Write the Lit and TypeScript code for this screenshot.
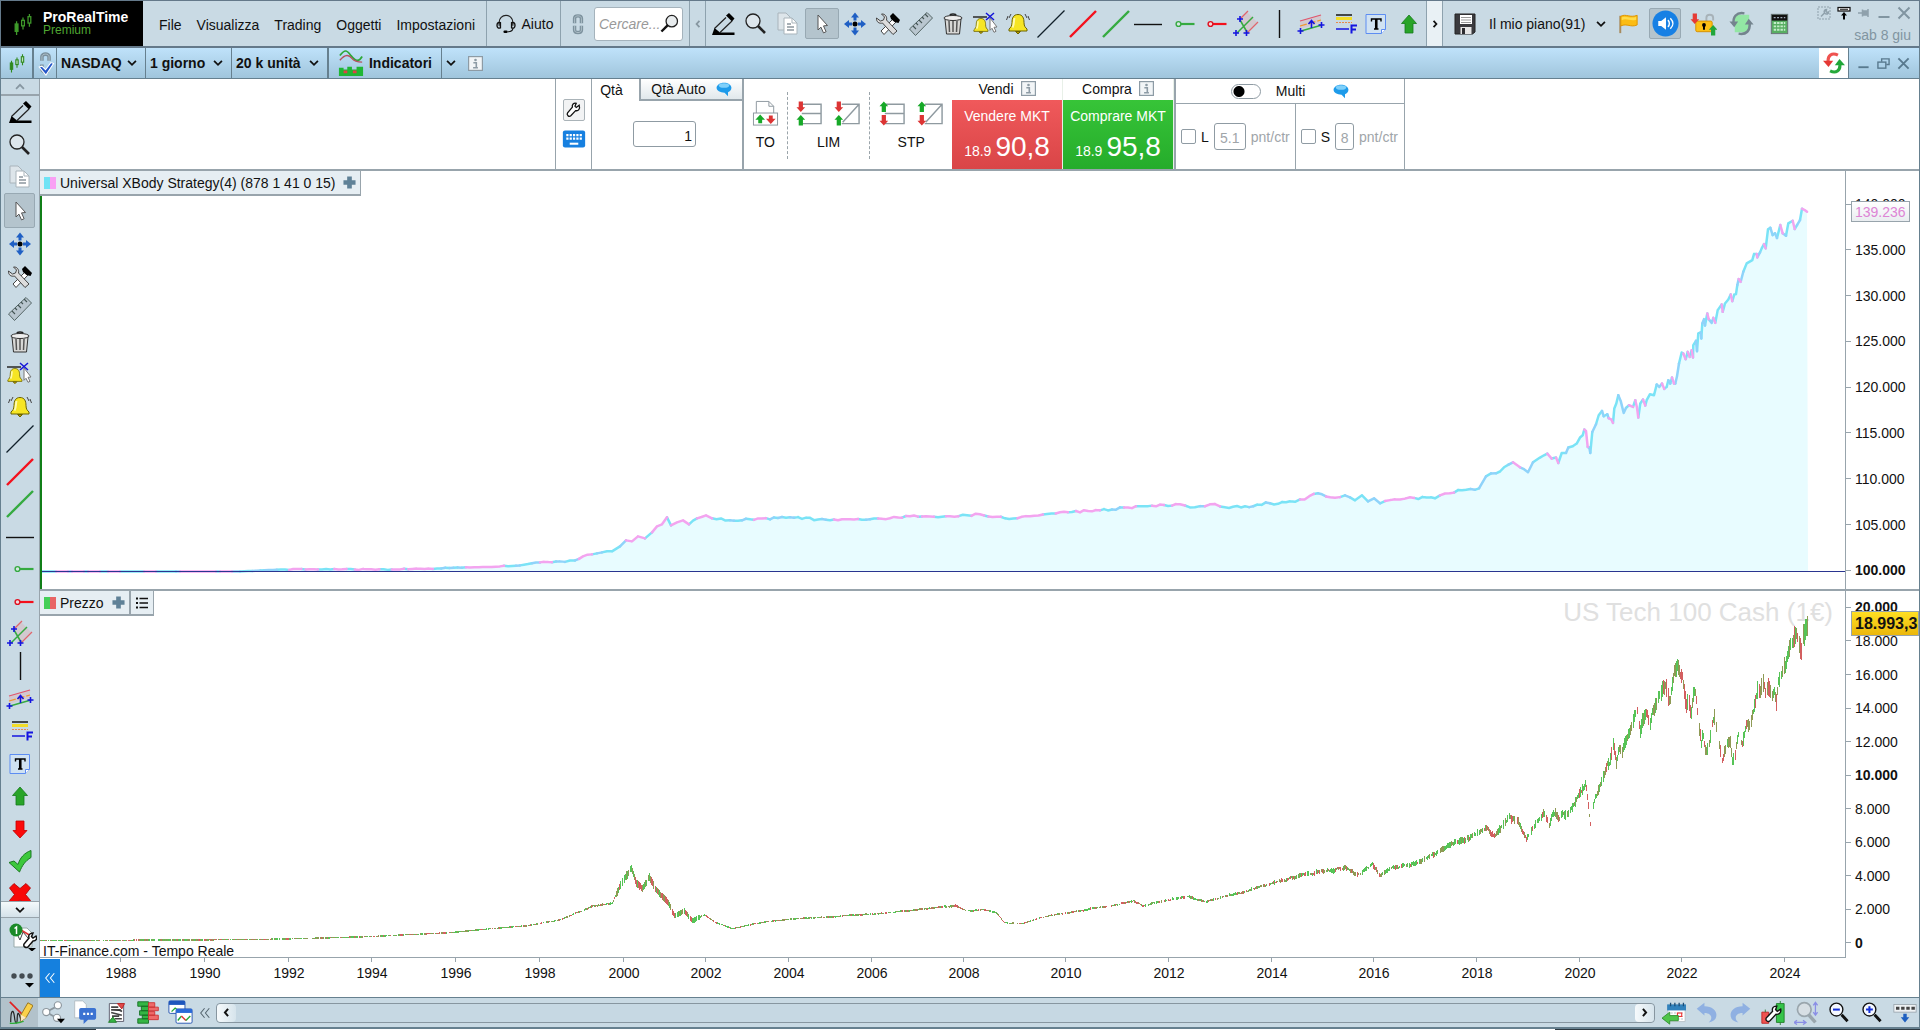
import { LitElement, html, svg, css, nothing } from "lit";
import { customElement } from "lit/decorators.js";
import { styleMap } from "lit/directives/style-map.js";

type Point = [number, number];

/* ---------- icons: 28 x 28 grid ---------- */

const plus = (x: number, y: number) =>
  svg`<path d="M${x - 3} ${y}h6M${x} ${y - 3}v6" stroke="#1414e0" stroke-width="1.6"/>`;

const bell = svg`<path d="M14 4.500c-4.500 0-6 3.500-6 8 0 4-1.500 5-3 6.500v2h18v-2c-1.500-1.500-3-2.500-3-6.500 0-4.500-1.500-8-6-8z" fill="#f6e524" stroke="#6b6200"/><path d="M10.500 8c-1 3 0 6-2 9.500" stroke="#fffbb0" stroke-width="2" fill="none"/><path d="M11.500 21.500h5l-2.500 2.500z" fill="#b59a00" stroke="#6b6200"/>`;

const lens = (color: string) => svg`<circle cx="11" cy="11" r="7" fill="#dde6ec" stroke="${color}" stroke-width="1.300"/><path d="m16 16 7 7" stroke="${color}" stroke-width="2.600"/>`;

const candles = svg`<g stroke="#2f8a1e" stroke-width="1.400"><path d="M7 11v15M14 7v13M21 3v14" /><rect x="5.500" y="14" width="3" height="8" fill="#2f8a1e"/><rect x="12.500" y="10" width="3" height="6" fill="#bfe0c0"/><rect x="19.500" y="6" width="3" height="7" fill="#bfe0c0"/></g>`;
const brandCandles = svg`<g stroke="#3f9a2a" stroke-width="1.400"><path d="M7 11v15M14 7v13M21 3v14" /><rect x="5.500" y="14" width="3" height="8" fill="#3f9a2a"/><rect x="12.500" y="10" width="3" height="6" fill="#000"/><rect x="19.500" y="6" width="3" height="7" fill="#000"/></g>`;

const arrowUp = (x: number, y: number, c: string) =>
  svg`<path d="M${x} ${y}l4.500 5h-2.300v6h-4.400v-6h-2.300z" fill="${c}"/>`;
const arrowDown = (x: number, y: number, c: string) =>
  svg`<path d="M${x} ${y}l4.500-5h-2.300v-6h-4.400v6h-2.300z" fill="${c}"/>`;
const GREEN = "#17a928";
const RED = "#dc3434";

const glass = (inner: unknown) => svg`<circle cx="11" cy="10" r="7.500" fill="#f4f8ff" stroke="#111" stroke-width="1.600"/>${inner}<path d="m17 16 7 7.500" stroke="#111" stroke-width="3.400"/>`;

const ICONS: Record<string, unknown> = {
  pencil: svg`<path d="m17 7.500-11.500 11M23 11 11 22.500" stroke="#222" stroke-width="1.200"/><path d="m20 3 5.500 5.500-2.500 3-6-6z"/><path d="M5.500 18 3 25h22.500v-2.500H11z"/>`,
  search: lens("#222"),
  copy: svg`<g stroke="#a9b4bb"><path d="M4 3h8l4 4v13H4z" fill="#dde5ea"/><path d="M10 8h8l5 5v11H10z" fill="#fff"/></g><path d="M18 8v5h5" fill="none" stroke="#a9b4bb"/><path d="M13 14h4M13 17h7M13 20h7" stroke="#8c979e" stroke-width="1.500"/>`,
  cursor: svg`<path d="m10 5 9.500 10.500-4 .4 2.600 5.800-2.600 1.200-2.600-5.800-2.900 2.900z" fill="#fff" stroke="#555"/>`,
  move: svg`<g fill="#1f5fc4"><path d="m14 2.500 4 5h-2.500v3h-3v-3H10zM14 25.500l4-5h-2.500v-3h-3v3H10zM3 14l5-4v2.500h3v3H8V18zM25 14l-5-4v2.500h-3v3h3V18z"/></g><circle cx="14" cy="14" r="2.500"/>`,
  tools: svg`<path d="m7 21 12-12 3 3L10 24.500z" fill="#fff" stroke="#444"/><path d="M2.500 8c-.5 4 3 6 6 5L19 24.500l4-3.500L12.500 10c1-3-1.500-6.500-5-6l3 3-1 3-3 1z" fill="#dcdcdc" stroke="#444"/><path d="m16 6 3-3 7 7-1.500 3-4-1-3.500-3z"/>`,
  ruler: svg`<path d="M2.500 19 20 2.500l5.500 5.500L8.500 25.500z" fill="#b9c6cf" stroke="#566"/><path d="m6 16 3 3m0-6 2 2m1-5 3 3m0-6 2 2m1-5 3 3" stroke="#455" stroke-width="1.100"/>`,
  bin: svg`<path d="m6 9 1.500 15h13L22 9z" fill="#d8d8d6" stroke="#333"/><path d="M10 11l.5 11M14 11v11M18 11l-.5 11" stroke="#555" stroke-width="1.500"/><ellipse cx="14" cy="8" rx="9" ry="2.500" fill="#eee" stroke="#333"/><path d="M11 5.500c0-2 6-2 6 0" fill="none" stroke="#222" stroke-width="1.500"/>`,
  alert: svg`<path d="M1 7h14" stroke="#333" stroke-width="1.600"/><g transform="translate(-2 5) scale(.78)">${bell}</g><path d="m14 3 8 7m0-7-8 7" stroke="#1414d8" stroke-width="1.500"/><path d="m18 8 7 9-3 .3 2 4-2 1-2-4-2 2z" fill="#fff" stroke="#777"/>`,
  bell: svg`${bell}<path d="M4 6 2.500 10M7 4 5 8M24 6l1.500 4M21 4l2 4" stroke="#444" stroke-width="1"/>`,
  line: svg`<path d="M.5 27.500 27.500.5" stroke="#10202a" stroke-width="1.300"/>`,
  redline: svg`<path d="M1 27 27 1" stroke="#f4101c" stroke-width="2.400"/>`,
  greenline: svg`<path d="M1 27 27 1" stroke="#35aa40" stroke-width="2.400"/>`,
  hline: svg`<path d="M0 14.500h28" stroke="#111" stroke-width="1.400"/>`,
  greenray: svg`<path d="M14 14h13.500" stroke="#35aa40" stroke-width="2.200"/><circle cx="11.500" cy="14" r="2.400" fill="#d7e6e4" stroke="#35aa40" stroke-width="1.400"/>`,
  redray: svg`<path d="M14 14h13.500" stroke="#f4101c" stroke-width="2.200"/><circle cx="11.500" cy="14" r="2.400" fill="#f0d8dc" stroke="#e01020" stroke-width="1.400"/>`,
  fork: svg`<path d="m8 9 7-7 10 10-12 12z" fill="#e3a9ad" opacity=".35"/><path d="m8 9 8-8M15 23l11-11" stroke="#e0656c" stroke-width="1.300"/><path d="M5 23 21 7M8 10l7 12" stroke="#35aa40" stroke-width="1.500"/>${plus(8, 9)}${plus(4, 23)}${plus(14.500, 23)}`,
  vline: svg`<path d="M14.500 0v28" stroke="#111" stroke-width="1.400"/>`,
  regression: svg`<path d="m3 11 21-6v8L3 19z" fill="#e3a9ad" opacity=".35"/><path d="m3 11 21-6" stroke="#e0556c" stroke-width="1.200"/><path d="m3 16 21-6" stroke="#f0952c" stroke-width="1.300" stroke-dasharray="7 2"/><path d="m4 21 21-6" stroke="#35aa40" stroke-width="1.500"/><path d="M14.500 18v-7m-3 3 3-3.500 3 3.500" stroke="#1414e0" stroke-width="1.600" fill="none"/>${plus(3.500, 21)}${plus(24.500, 15)}`,
  fibo: svg`<path d="M6 5h16" stroke="#222" stroke-width="1.600"/><path d="M6 8.500h16" stroke="#f2dc28" stroke-width="3"/><path d="M6 12.500h16" stroke="#e88a4a" stroke-dasharray="2 1"/><path d="M6 19h13" stroke="#1414e0" stroke-width="1.500"/><path d="M21.500 23.500v-8H27M21.500 19.500H26" stroke="#1414e0" stroke-width="2" fill="none"/>`,
  text: svg`<path d="M4 4.500h19.500v15l-4 4H4z" fill="#d0e2f2" stroke="#5d8df2"/><path d="M23.500 19.500h-4v4" fill="#fff" stroke="#5d8df2"/><path d="M9.500 11.500V9h9.500v2.500M12 19h4.500" stroke="#000" stroke-width="1.400" fill="none"/><path d="M14.250 9v10" stroke="#000" stroke-width="2.600"/>`,
  up: svg`<path d="m14 5 7.500 8.500H18V23h-8v-9.500H6.500z" fill="#28a428" stroke="#157a1c" stroke-width=".8"/>`,
  down: svg`<path d="m14 23 7-7.500h-3V6h-8v9.500H7z" fill="#fb0a0a" stroke="#c40000" stroke-width=".8"/>`,
  check: svg`<path d="M3 15.500l5-1.500 4 3.500C14 11 18 6 25 3.500v7C19 14 16 19 13.500 25z" fill="#3cc83c" stroke="#1d7a24"/>`,
  cross: svg`<path d="m3.500 8 4.500-4.500 6 5 6-5L24.500 8l-5 6.500 5 6L20 25l-6-5-6 5-4.500-4.500 5-6z" fill="#f80808" stroke="#a00" stroke-width=".8"/>`,
  headset: svg`<path d="M6 16V12a8 8 0 0 1 16 0v4" fill="none" stroke="#222" stroke-width="1.400"/><path d="M7.500 12.500c-2.500-1-4 .5-4 3s1.500 4 4 3zM20.500 12.500c2.500-1 4 .5 4 3s-1.500 4-4 3z" fill="none" stroke="#111" stroke-width="1.600"/><path d="M22 19c0 3-3 4-6 4" fill="none" stroke="#111" stroke-width="1.300"/><rect x="11" y="21.500" width="5" height="3" rx="1.500"/>`,
  link: svg`<g fill="none" stroke="#7d929e" stroke-width="4"><path d="M10 13V7.500c0-4 8-4 8 0V13M10 16v5c0 4 8 4 8 0v-5"/></g><g fill="none" stroke="#b3c3cc" stroke-width="1"><path d="M10 13V7.500c0-4 8-4 8 0V13M10 16v5c0 4 8 4 8 0v-5"/></g>`,
  linkcheck: svg`<g fill="none" stroke="#7b909d" stroke-width="4"><path d="M10 11V6.500c0-4 8-4 8 0V11M10 15v5c0 3 4 4 7 2"/></g><path d="M10 11V6.500c0-4 8-4 8 0V11" fill="none" stroke="#b3c3cc"/><path d="m7 18 3-1 4 4 6-8 3 1-8.500 13z" fill="#2456c8" stroke="#fff" stroke-width="1.200"/>`,
  glasssearch: svg`<circle cx="16.500" cy="10" r="8" fill="#e8ecee" stroke="#222" stroke-width="1.800"/><path d="m11 15.500-9 9" stroke="#111" stroke-width="3.400"/>`,
  save: svg`<path d="M4 4h20v18l-2.500 2H4z" fill="#3a3a3e" stroke="#222"/><rect x="9" y="5" width="12" height="9" fill="#fff"/><path d="M10 7.500h10M10 10h10M10 12.500h10" stroke="#999"/><rect x="9.500" y="17" width="11" height="7" fill="#e6e6e6"/><rect x="11" y="18" width="3" height="6" fill="#2c2c30"/>`,
  flag: svg`<path d="M6.500 6v18" stroke="#a78b5e" stroke-width="2"/><path d="M7 6.500c6-3 9 2 17-1v10c-7 3-10-2-17 1z" fill="#fbbc14" stroke="#df9500"/><path d="M8 7.500c5-2 9 2 15-.5v3c-6 2-10-2-15 .5z" fill="#ffdc4a"/>`,
  sound: svg`<circle cx="14" cy="14" r="13.500" fill="#1780e4"/><path d="M6.500 11.500h3l5-4v13l-5-4h-3z" fill="#fff"/><path d="M16.500 10.500c2 2 2 5 0 7M19 8.500c3.500 3.500 3.500 7.500 0 11" stroke="#fff" stroke-width="1.500" fill="none"/>`,
  lock: svg`<path d="M17 12V8c0-4 7-4 7 0v3" fill="none" stroke="#a7b2b8" stroke-width="2"/><rect x="6" y="11.500" width="17" height="11" rx="1.500" fill="#fcc015" stroke="#d69000"/><circle cx="14.500" cy="15.500" r="2"/><path d="M13.500 16h2v4.500h-2z"/>${arrowDown(5, 14.500, "#e63a34")}${arrowUp(24, 15.500, "#21a63a")}`,
  sync: svg`<path d="M7 5h15v15l-3 3H7z" fill="#93e6a4"/><path d="M17 3.500C9 2 4.500 7 6 15" fill="none" stroke="#74848e" stroke-width="2.600"/><path d="m1.500 12 5 6 4-6z" fill="#74848e"/><path d="M11 24.500c8 1.500 12-3 11.500-11" fill="none" stroke="#74848e" stroke-width="2.600"/><path d="m26.500 15-5-6-4 6z" fill="#74848e"/>`,
  calc: svg`<rect x="5.500" y="4.500" width="17" height="20" fill="#58ae62" stroke="#6a7278"/><rect x="6" y="5" width="16" height="6" fill="#111"/><path d="M8 8h12" stroke="#cde" stroke-dasharray="2 1.500"/><path d="M8 13.500h12M8 17h12M8 20.500h12" stroke="#c3ecc8" stroke-width="2" stroke-dasharray="2.500 1"/>`,
  refresh: svg`<path d="M19 4C11 0 6 5 6.500 12" fill="none" stroke="#ef5350" stroke-width="4"/><path d="M0 11h13l-6 8z" fill="#e53935"/><path d="M9 24c8 4 13-1 12.500-8" fill="none" stroke="#25a93a" stroke-width="4"/><path d="M28 17H15l6-8z" fill="#1fa638"/>`,
  indicators: svg`<path d="M2 6C8-2 10 1 14 6s8 8 12 1" fill="none" stroke="#2ca836" stroke-width="1.800"/><path d="M2 11C8 4 12 5 15 9s7 4 11 4" fill="none" stroke="#b4525e" stroke-width="1.500"/><path d="M1 28v-9h5v2h4v-3h5v3h5v-3h7v10z" fill="#1fb634"/><path d="M6 22h4v3H6zM16 22h4v3h-4z" fill="#e04343"/>`,
  candles,
  wrench: svg`<path d="M22 6.500 17.500 10 15.500 8l2-4.500c-4-1-7 2-6 6L4 18.500c-2 3 2 7 5 4.500l7.500-8c4 1 7.500-2.500 5.500-8.500z" fill="#fff" stroke="#111" stroke-width="2"/>`,
  keyboard: svg`<rect x="1" y="4" width="26" height="20" rx="2.500" fill="#1780e0"/><path d="M5 9.500h19M5 13.500h19" stroke="#fff" stroke-width="2.600" stroke-dasharray="2.600 1.300"/><path d="M9 19.500h10" stroke="#fff" stroke-width="2.400"/>`,
  bubble: svg`<path d="M14 3c7 0 13 3.500 13 9 0 4-2.500 6.500-6 7.500v7l-6-6C7 20.500 1 17 1 12S7 3 14 3z" fill="#1e9bea"/><ellipse cx="14" cy="8" rx="9" ry="4" fill="#7fd0fa"/>`,
  to: svg`<path d="M4.500 14V1.500h13l5 5V14" fill="#fff" stroke="#8c979e"/><path d="M17.500 1.500v5h5" fill="none" stroke="#8c979e"/><rect x="1.500" y="13.500" width="25" height="12.500" fill="#fff" stroke="#8c979e"/><path d="m8.500 15 5 5.500h-3V24h-4v-3.500h-3z" fill="#17a928"/><path d="m19.500 25 5-5.500h-3V16h-4v3.500h-3z" fill="#dc3434"/>`,
  limH: svg`<path d="M6 4.500h20v20H6M6 14h20" fill="none" stroke="#8f9aa0" stroke-width="1.500"/>${arrowDown(5, 12.500, RED)}${arrowUp(5, 15.500, GREEN)}`,
  limD: svg`<path d="M8 4.500h18v20H8M26 4.500 9 23" fill="none" stroke="#8f9aa0" stroke-width="1.500"/>${arrowDown(5, 12.500, RED)}${arrowUp(5, 15.500, GREEN)}`,
  stpH: svg`<path d="M6 4.500h20v20H6M6 14h20" fill="none" stroke="#8f9aa0" stroke-width="1.500"/>${arrowUp(5, 1.500, GREEN)}${arrowDown(5, 26.500, RED)}`,
  stpD: svg`<path d="M8 4.500h18v20H8M26 4.500 9 23" fill="none" stroke="#8f9aa0" stroke-width="1.500"/>${arrowUp(5, 1.500, GREEN)}${arrowDown(5, 26.500, RED)}`,
  info: svg`<rect x="1" y="1" width="26" height="26" fill="#f2f5f7" stroke="#8d9ba5" stroke-width="2.500"/><circle cx="14" cy="7.500" r="2.500" fill="#8d9ba5"/><path d="M10 12.500h5.500V21M9.500 22h9" stroke="#8d9ba5" stroke-width="3" fill="none"/>`,
  chevDown: svg`<path d="m3 8 11 11L25 8" fill="none" stroke="#111" stroke-width="5"/>`,
  chevUp: svg`<path d="m3 19 11-11 11 11" fill="none" stroke="#8797a1" stroke-width="5"/>`,
  chevRight: svg`<path d="m10 5 8 9-8 9" fill="none" stroke="#111" stroke-width="5"/>`,
  chevLeft: svg`<path d="m18 5-8 9 8 9" fill="none" stroke="#111" stroke-width="5"/>`,
  chevLeftGrey: svg`<path d="m18 5-8 9 8 9" fill="none" stroke="#8797a1" stroke-width="5"/>`,
  dblLeft: svg`<path d="M13 3 4 14l9 11M24 3l-9 11 9 11" fill="none" stroke="currentColor" stroke-width="2.400"/>`,
  cross4: svg`<path d="M9 1h10v8h8v10h-8v8H9v-8H1V9h8z" fill="#5f8197"/>`,
  list: svg`<path d="M9 5h17M9 14h17M9 23h17" stroke="#111" stroke-width="3"/><path d="M2 5h4M2 14h4M2 23h4" stroke="#111" stroke-width="4"/>`,
  wrenchBox: svg`<rect x="2" y="2" width="24" height="24" fill="none" stroke="#8fa1ac" stroke-width="2" stroke-dasharray="4 2"/><path d="m8 21 8-8M15 14c-2-4 1-7 4-7l-1 4 2 2 3-1c1 4-4 6-8 2z" stroke="#8fa1ac" stroke-width="3" fill="none"/>`,
  dock: svg`<rect x="2" y="3" width="24" height="7" fill="#fff" stroke="#111" stroke-width="2.500"/><path d="M6 6.500h16" stroke="#111" stroke-width="2"/><path d="m14 12 6 7h-4v8h-4v-8H8z"/>`,
  pin: svg`<path d="M2 14h9M11 7v14M13 10h8v8h-8zM22 6v16" stroke="#8fa1ac" fill="#8fa1ac" stroke-width="3"/>`,
  min: svg`<path d="M3 22h22" stroke="currentColor" stroke-width="4"/>`,
  close: svg`<path d="m3 3 22 22M25 3 3 25" stroke="currentColor" stroke-width="4"/>`,
  restore: svg`<path d="M10 10V4h16v12h-6" fill="none" stroke="currentColor" stroke-width="3"/><rect x="2" y="11" width="17" height="13" fill="none" stroke="currentColor" stroke-width="3"/>`,
  report: svg`<path d="M5 5h13l5 5v14H5z" fill="#fff" stroke="#9aa"/><path d="m8 11 3 6 3-8 5 6" stroke="#444" fill="none"/><path d="m12 7 10 6" stroke="#d33" stroke-width="1.500"/><path d="M27 13l-3 2-1.500-1.500L24 10c-3 0-5 2-4 5l-5 6c-1 3 2 4 4 3l5-6c3 0 4.500-2 3-5z" fill="#fff" stroke="#111" stroke-width="1.500"/><path d="m19 25 8 0-4 3.500z"/><circle cx="7" cy="7" r="6.500" fill="#1b8a28"/><path d="M5.500 5.500 7.500 4v7" stroke="#fff" stroke-width="1.500" fill="none"/>`,
  dots: svg`<g fill="#444c52"><circle cx="5" cy="11" r="2.700"/><circle cx="13" cy="11" r="2.700"/><circle cx="21" cy="11" r="2.700"/></g><path d="m16 18 9 0-4.500 4.500z"/>`,
  draw: svg`<path d="m3 2 15 15" stroke="#e02020" stroke-width="1.800"/><path d="M4 24c0-14 3-15 4-6s3 8 3 2 1-8 3-2 1 5 2 5" fill="none" stroke="#222" stroke-width="1.300"/><path d="M3 25c8 1 10-1 15-2" stroke="#2cae3a" stroke-width="1.500" fill="none"/><path d="m15 16 7.500-13L28 6l-7.500 13-5.500 4z" fill="#fbd14a" stroke="#94711c"/><path d="m15 16 5.500 3-5.500 4z" fill="#fbe9c4"/>`,
  share: svg`<path d="M21 6 7 13.500 20 21" fill="none" stroke="#8c979e" stroke-width="2"/><g fill="#fff" stroke="#8c979e" stroke-width="1.300"><circle cx="20" cy="6" r="4"/><circle cx="7" cy="13.500" r="4"/><circle cx="19" cy="20" r="4"/></g><path d="m19 21 9 0-4.500 5z"/>`,
  chat: svg`<path d="M3 1h9l4 4v15H3z" fill="#fff" stroke="#b0bac0"/><path d="M10 9h15c1 0 2 1 2 2v9c0 1-1 2-2 2h-7l-5 5v-5h-3c-1 0-2-1-2-2v-9c0-1 1-2 2-2z" fill="#3c73d2"/><path d="M12.500 15.500h11" stroke="#fff" stroke-width="2.400" stroke-dasharray="2.400 1.800"/>`,
  book: svg`<path d="M6 4h16v20H6z" fill="#fff" stroke="#556"/><path d="M8 8h8M8 11h10l2 2M8 14l12 3M9 18h8M12 21h8" stroke="#444" stroke-width="1.800"/><path d="M15 4h8l-3 6z" fill="#e04a4a" stroke="#b22"/><path d="M5 25h9l-4-6z" fill="#35b544" stroke="#1d7a24"/>`,
  depth: svg`<g fill="#35b544" stroke="#167024"><path d="M2 2h12v5H2zM6 7h8v5H6zM4 12h10v5H4zM7 17h7v4H7zM2 21h12v5H2z"/></g><g fill="#ef6a6a" stroke="#c33"><path d="M14 3h7v5h-7zM14 8h11v4H14zM14 13h7v4h-7zM14 17h11v5H14z"/></g>`,
  windows: svg`<rect x="1" y="1" width="18" height="14" rx="1.500" fill="#fff" stroke="#1d4fae"/><path d="M1 1h18v4.500H1z" fill="#1d56bd"/><path d="m4 13 4-4 4 3" stroke="#2a3" fill="none" stroke-width="1.500"/><rect x="9" y="10" width="18" height="16" rx="1.500" fill="#fff" stroke="#1d4fae"/><path d="M9 10h18v4.500H9z" fill="#2a6ad8"/><path d="m11 23 4-5" stroke="#2a3" stroke-width="1.600"/><path d="m15 18 5 5" stroke="#d33" stroke-width="1.600"/><path d="m20 23 5-5" stroke="#2a3" stroke-width="1.600"/>`,
  calendar: svg`<path d="M7 4h20v20H7z" fill="#fff" stroke="#b5c0c6"/><path d="M6 4h22v7H6z" fill="#3182bd"/><path d="M10 2v4M15 2v4M20 2v4M25 2v4" stroke="#1a4d78" stroke-width="1.500"/><path d="M10 14h15M10 18h15M10 21h15" stroke="#aab5bb" stroke-dasharray="2.500 1.500"/><rect x="18" y="14" width="5" height="4" fill="none" stroke="#e33" stroke-width="1.300"/><path d="m0 20 9-7v4h10v6H9v4z" fill="#4fc54a" stroke="#2c8c2c"/>`,
  undo: svg`<path d="m2 9 9-7v4c9 0 14 5 14 10 0 5-3 8-9 9 5-4 4-11-5-11v3z" fill="#8fb0e2"/>`,
  redo: svg`<path d="m26 9-9-7v4C8 6 3 11 3 16c0 5 3 8 9 9-5-4-4-11 5-11v3z" fill="#8fb0e2"/>`,
  candlewrench: svg`<path d="M1 13h8v13H1z" fill="#ef5350" stroke="#b22"/><path d="M18 3h9v22h-9z" fill="#35c44a" stroke="#1d7a24"/><path d="M22.500 0v3M22.500 25v3M5 10v3" stroke="#1d7a24"/><path d="M23 9.500 19 12 17 10l1.500-4c-4-.5-6 2.500-5 6L6 20c-1 3 2 5 4.500 3l7-7.500c3 .5 6.500-2 5.500-6z" fill="#fff" stroke="#111" stroke-width="1.600"/>`,
  zoomfit: svg`<circle cx="12" cy="10" r="8" fill="#d7dfe4" stroke="#9aa6ad" stroke-width="2"/><path d="m17 16 8 9" stroke="#9aa6ad" stroke-width="4"/><path d="M25 2v14m-2.500-11L25 1.500 27.500 5m-5 8 2.500 3.500 2.500-3.500M0 25h14M3.500 22.500 0 25l3.500 2.500m7-5L14 25l-3.500 2.500" stroke="#8a8ee6" stroke-width="1.500" fill="none"/>`,
  zoomout: glass(svg`<path d="M7 10h8" stroke="#1430d8" stroke-width="2.400"/>`),
  zoomin: glass(svg`<path d="M7 10h8M11 6v8" stroke="#1430d8" stroke-width="2.400"/>`),
  keys: svg`<rect x="1" y="4" width="26" height="9" fill="#eef2f4" stroke="#9aa6ad"/><path d="M3.500 8.500h22" stroke="#444" stroke-width="3.500" stroke-dasharray="4 2"/><path d="m14 25-5-6h3v-4h4v4h3z" fill="#1e5fc0"/>`,
};

const icon = (name: string, size = 28) =>
  html`<svg class="icon" width=${size} height=${size} viewBox="0 0 28 28" fill="none" aria-hidden="true"><g fill="#000">${ICONS[name] ?? nothing}</g></svg>`;

const TOOLS: [string, string][] = [
  ["pencil", "Matita"], ["search", "Zoom"], ["copy", "Copia"], ["cursor", "Cursore"],
  ["move", "Sposta"], ["tools", "Strumenti"], ["ruler", "Righello"], ["bin", "Cestino"],
  ["alert", "Nuovo allarme"], ["bell", "Allarmi"], ["line", "Linea"], ["redline", "Linea rossa"],
  ["greenline", "Linea verde"], ["hline", "Orizzontale"], ["greenray", "Raggio verde"],
  ["redray", "Raggio rosso"], ["fork", "Pitchfork"], ["vline", "Verticale"],
  ["regression", "Regressione"], ["fibo", "Fibonacci"], ["text", "Testo"], ["up", "Freccia su"],
];
const SIDE_TOOLS: [string, string][] = [...TOOLS, ["down", "Freccia giù"], ["check", "Conferma"], ["cross", "Elimina"]];

/* ---------- chart data ---------- */

const zoomed = (ox: number, oy: number, flat: number[]): Point[] => {
  const out: Point[] = [];
  for (let i = 0; i < flat.length; i += 2) out.push([ox + flat[i] / 3, oy + flat[i + 1] / 3]);
  return out;
};
const pairs = (flat: number[]): Point[] => {
  const out: Point[] = [];
  for (let i = 0; i < flat.length; i += 2) out.push([flat[i], flat[i + 1]]);
  return out;
};

const EQUITY: Point[] = [
  ...pairs([
    40, 571, 180, 571, 240, 571, 285, 569, 400, 569, 470, 567, 500, 566, 520, 565, 540, 562, 560, 561, 575, 560,
    583, 556, 592, 554, 602, 552, 612, 551, 620, 546, 626, 540, 632, 541, 638, 536, 645, 538, 652, 532, 657, 526,
    662, 524, 667, 517, 671, 525, 677, 522, 683, 520, 689, 524, 697, 518, 706, 515, 712, 518, 730, 520, 750, 519,
    790, 517, 830, 520, 870, 519, 910, 516, 950, 516, 980, 514, 1005, 518, 1030, 516, 1060, 512, 1100, 510,
    1140, 506, 1180, 504, 1195, 507, 1210, 504, 1225, 507, 1245, 506, 1270, 503, 1290, 501, 1305, 499, 1318, 493,
    1330, 497, 1345, 495, 1355, 500, 1362, 495, 1368, 501, 1374, 498, 1380, 503, 1395, 499, 1410, 497, 1435, 498,
    1450, 493, 1462, 490, 1479, 488, 1486, 476, 1496, 473, 1504, 467, 1513, 462, 1520, 467, 1528, 472, 1533, 462,
  ]),
  ...zoomed(1540, 170, [
    0, 862, 12, 855, 22, 850, 35, 865, 48, 862, 55, 878, 65, 848, 78, 848, 85, 832, 98, 828, 110, 820, 120, 802,
    128, 795, 133, 778, 138, 782, 143, 830, 148, 832, 151, 848, 157, 785, 168, 762, 176, 735, 186, 722, 191, 738,
    202, 732, 206, 744, 214, 748, 219, 758, 223, 715, 229, 700, 235, 675, 242, 692, 251, 728, 258, 713, 267, 705,
    279, 710, 286, 690, 291, 712, 295, 742, 301, 700, 309, 688, 316, 706, 320, 690, 330, 672, 342, 675, 350, 643,
    358, 650, 366, 640, 373, 656, 380, 650, 385, 630, 391, 640, 396, 622, 402, 640, 406, 640, 411, 618, 417, 580,
    425, 547, 430, 550, 437, 567, 443, 545, 449, 560, 455, 540, 459, 562, 460, 525, 468, 512, 471, 543, 475, 490,
    482, 487, 484, 505, 487, 460, 492, 447, 495, 466, 502, 430, 506, 447, 515, 458, 520, 443, 526, 458, 533, 420,
    545, 403, 548, 425, 555, 400, 565, 388, 572, 373, 577, 393, 583, 373, 588, 372, 592, 345, 596, 327, 602, 335,
    610, 305, 620, 280, 637, 270, 642, 252, 650, 252, 652, 262, 660, 247, 665, 235, 672, 222, 677, 235, 684, 178,
    691, 173, 698, 195, 705, 190, 711, 204, 721, 165, 728, 190, 738, 197, 745, 160, 758, 152, 764, 177, 771, 165,
    780, 150, 786, 116, 794, 120, 801, 125,
  ]),
];

const PRICE: Point[] = [
  ...pairs([
    40, 942, 245, 941, 300, 940, 367, 938, 450, 934, 490, 930, 526, 927, 560, 921, 575, 915, 590, 908, 612, 904,
    620, 886, 627, 876, 631, 870, 636, 884, 642, 890, 649, 878, 655, 890, 662, 898, 668, 904, 674, 917, 684, 912,
    692, 922, 704, 916, 716, 924, 732, 930, 745, 927, 765, 923, 795, 920, 830, 918, 860, 916, 880, 915, 905, 912,
    935, 909, 955, 907, 966, 912, 985, 911, 996, 914, 1004, 924, 1022, 925, 1040, 919, 1060, 915, 1085, 911,
    1102, 908, 1120, 905, 1133, 902, 1142, 907, 1155, 904, 1172, 900, 1188, 898, 1205, 903, 1222, 898, 1240, 894,
    1260, 888, 1280, 882, 1298, 877, 1322, 872, 1345, 869, 1357, 876, 1372, 866, 1379, 877, 1390, 869, 1414, 865,
    1432, 856, 1450, 845, 1470, 838, 1485, 829, 1494, 836, 1509, 818, 1518, 824, 1526, 842, 1533, 827,
  ]),
  ...zoomed(1540, 580, [
    0, 715, 10, 702, 20, 720, 28, 735, 35, 705, 45, 698, 55, 715, 60, 712, 65, 700, 78, 705, 90, 690, 100, 675,
    110, 655, 120, 640, 128, 630, 136, 610, 140, 650, 145, 690, 151, 740, 157, 690, 165, 650, 172, 640, 180, 610,
    188, 590, 195, 570, 200, 550, 207, 545, 213, 515, 218, 485, 223, 510, 228, 545, 235, 510, 245, 525, 250, 495,
    260, 465, 270, 455, 278, 435, 285, 410, 290, 400, 295, 425, 300, 460, 307, 430, 315, 395, 320, 400, 325, 425,
    331, 430, 337, 400, 345, 375, 352, 350, 362, 345, 370, 325, 377, 310, 382, 340, 389, 355, 396, 310, 403, 275,
    412, 265, 418, 285, 425, 290, 432, 330, 439, 375, 445, 350, 452, 420, 458, 360, 464, 340, 470, 390, 478, 450,
    483, 490, 488, 460, 496, 520, 505, 510, 512, 460, 518, 420, 524, 415, 531, 460, 538, 500, 545, 550, 552, 520,
    558, 500, 565, 490, 570, 490, 576, 545, 583, 540, 588, 500, 594, 465, 602, 480, 607, 490, 613, 460, 620, 435,
    630, 435, 638, 400, 645, 370, 652, 330, 660, 330, 667, 305, 675, 340, 685, 315, 693, 345, 702, 335, 708, 370,
    714, 310, 722, 285, 728, 255, 736, 260, 743, 220, 750, 205, 758, 190, 766, 170, 772, 175, 778, 190, 783, 220,
    788, 170, 796, 155, 799, 140,
  ]),
];

const makeRandom = (seed: number) => () => {
  seed = (seed * 1664525 + 1013904223) % 4294967296;
  return seed / 4294967296;
};

const valueAt = (points: Point[], x: number): number => {
  for (let i = 1; i < points.length; i++) {
    if (x <= points[i][0]) {
      const [x0, y0] = points[i - 1];
      const [x1, y1] = points[i];
      return y0 + ((y1 - y0) * (x - x0)) / (x1 - x0 || 1);
    }
  }
  return points[points.length - 1][1];
};

const detail = (points: Point[]): Point[] => {
  const rnd = makeRandom(11);
  const out: Point[] = [points[0]];
  for (let i = 1; i < points.length; i++) {
    const [x0, y0] = points[i - 1];
    const [x1, y1] = points[i];
    const steps = Math.max(1, Math.floor((x1 - x0) / 4));
    for (let s = 1; s <= steps; s++) {
      const x = x0 + ((x1 - x0) * s) / steps;
      const amp = s === steps || x < 285 ? 0 : x < 560 ? 1 : x < 1180 ? 2 : 3;
      out.push([x, y0 + ((y1 - y0) * s) / steps + (rnd() - 0.5) * amp]);
    }
  }
  return out;
};

const fine = detail(EQUITY);
const xy = (p: Point) => `${p[0].toFixed(1)} ${p[1].toFixed(1)}`;

const equityColors = ["#7ae3f6", "#8fd3fa", "#f3a4ef"];
const equityPaths = (() => {
  const rnd = makeRandom(5);
  const d = ["", "", ""];
  let run = 0;
  for (let i = 1; i < fine.length; i++) {
    const [x] = fine[i];
    const drop = fine[i][1] - fine[i - 1][1];
    let k: number;
    if (x < 1500) {
      if (run <= 0 && rnd() < 0.2) run = 3;
      run--;
      k = run >= 0 ? 2 : rnd() < 0.2 ? 1 : 0;
    } else {
      k = drop > 1.2 ? (rnd() < 0.65 ? 2 : 1) : rnd() < 0.25 ? 1 : 0;
    }
    d[k] += `M${xy(fine[i - 1])}L${xy(fine[i])}`;
  }
  return d;
})();
const equityArea = `M40 571L${fine.map(xy).join("L")}L1808 571Z`;

const candleColors = ["#56c457", "#8f9a55", "#d35f60"];
const candlePaths = (() => {
  const rnd = makeRandom(21);
  const d = ["", "", ""];
  let prev = 942;
  let drift = 0;
  for (let x = 40; x <= 1807; x++) {
    const y = valueAt(PRICE, x);
    const height = 943 - y;
    const trend = y - prev;
    prev = y;
    drift = drift * 0.6 + (rnd() - 0.5) * height * 0.022;
    if (rnd() < 0.14) continue;
    const volatile = x > 615 && x < 700 ? 2 : 0;
    const half = Math.max(0.7, height * 0.02 * (0.6 + rnd() * 1.2) + volatile);
    const mid = y + drift;
    const r = rnd();
    const k = trend > 0.4 ? (r < 0.6 ? 2 : r < 0.9 ? 1 : 0) : trend < -0.4 ? (r < 0.6 ? 0 : r < 0.9 ? 1 : 2) : r < 0.45 ? 0 : r < 0.75 ? 1 : 2;
    d[k] += `M${x + 0.5} ${(mid - half).toFixed(1)}V${(mid + half).toFixed(1)}`;
  }
  return d;
})();

const YEARS: [string, number][] = [
  ["1988", 61], ["1990", 84], ["1992", 84], ["1994", 83], ["1996", 84], ["1998", 84], ["2000", 84], ["2002", 82],
  ["2004", 83], ["2006", 83], ["2008", 92], ["2010", 102], ["2012", 103], ["2014", 103], ["2016", 102],
  ["2018", 103], ["2020", 103], ["2022", 102], ["2024", 103], ["", 134],
];

@customElement("app-root")
export class AppRoot extends LitElement {
  static styles = css`
    :host { display: block; height: 100vh; font: 14px/16px "Liberation Sans", Arial, sans-serif; color: #111; --edge: #66808f; --bar: #c9dae4; --rule: #98a4ac; }
    * { box-sizing: border-box; }
    button, input, select { font: inherit; color: inherit; margin: 0; }
    button { display: flex; align-items: center; justify-content: center; border: 0; padding: 0; background: none; }
    select { appearance: none; border: 0; background: none; padding: 0; }
    .icon { display: block; flex: none; }
    .app { display: flex; flex-direction: column; height: 100%; background: #fff; overflow: hidden; }

    .top { display: flex; flex: none; height: 48px; background: var(--bar); border: solid #64798a; border-width: 1px 1px 2px; }
    .brand { display: flex; align-items: center; gap: 9px; width: 142px; padding-left: 11px; background: #000; }
    .brand-text { display: flex; flex-direction: column; font-size: 12px; line-height: 13px; }
    .brand-name { color: #fff; font-weight: bold; font-size: 14px; }
    .brand-tier { color: #4fa632; }
    .menu { display: flex; align-items: center; gap: 15px; padding: 3px 9px 0 16px; width: 343px; }
    .help { gap: 4px; width: 74px; border-left: 1px solid #8ea2ae; padding-top: 1px; }
    .link { width: 34px; border-left: 1px solid #8ea2ae; }
    .search { display: flex; align-items: center; align-self: center; width: 89px; height: 34px; padding: 0 2px 0 4px; background: #fff; border: 1px solid #a5b3bc; border-radius: 3px; }
    .search input { width: 61px; flex: none; border: 0; padding: 0; outline: 0; background: none; font-style: italic; }
    .search input::placeholder { color: #999; opacity: 1; }
    .fold { width: 17px; margin-left: 6px; border: solid #8ea2ae; border-width: 0 1px; }
    .more { width: 17px; background: #e9f1f5; border: solid #8ea2ae; border-width: 0 1px; }
    .tools { display: flex; flex: 1; align-items: center; padding: 0 1px; }
    .tools button { flex: 1; height: 31px; }
    .tools .on, .quick .on { background: #b4c4cd; border: 1px solid #98a9b3; border-radius: 2px; }
    .plan { display: flex; align-items: center; gap: 10px; padding: 0 5px 0 8px; }
    .picker { display: flex; align-items: center; gap: 10px; }
    .quick { display: flex; align-items: center; gap: 6px; }
    .quick button { width: 32px; height: 31px; }
    .corner { display: flex; flex-direction: column; justify-content: center; gap: 7px; width: 124px; padding: 1px 8px 0 0; color: #8195a1; text-align: right; }
    .corner-row { display: flex; justify-content: flex-end; gap: 6px; }

    .second { display: flex; flex: none; height: 31px; background: linear-gradient(#bfe2fa, #a0c5dc); border: solid var(--edge); border-width: 0 1px 1px; font-weight: bold; }
    .second > * { border-right: 1px solid var(--edge); }
    .second > .plain { border-right: 0; }
    .cell { width: 32px; }
    .cell-link { width: 24px; border-left: 1px solid var(--edge); }
    .choice { display: flex; align-items: center; justify-content: space-between; padding: 0 8px 0 4px; }
    .w-symbol { width: 89px; }
    .w-frame { width: 86px; }
    .w-units { width: 97px; border-right-width: 2px; }
    .ind { width: 113px; gap: 5px; font-weight: bold; }
    .ind-more { width: 17px; }
    .plain { display: flex; align-items: center; }
    .grow { flex: 1; padding-left: 9px; }
    .reload { width: 30px; background: #fff; }
    .window-buttons { gap: 7px; padding: 0 9px 0 8px; color: #58798e; }

    .body { display: flex; flex: 1; min-height: 0; border: solid var(--edge); border-width: 0 1px; }
    .side { display: flex; flex-direction: column; width: 39px; flex: none; background: var(--bar); border-right: 1px solid var(--rule); }
    .side-cap { flex: none; height: 17px; border-bottom: 2px solid var(--rule); }
    .side-clip { flex: 1; min-height: 0; overflow: hidden; }
    .side-list { display: flex; flex-direction: column; height: calc(100% + 9px); padding: 0 4px 0 3px; }
    .side-list button { flex: 1; min-height: 0; }
    .side-list .on { background: #b4c4cd; border: 1px solid #98a9b3; border-radius: 2px; }
    .side-foot { flex: none; height: 17px; background: linear-gradient(#f4f9fb, #d4e2ea); border: solid var(--rule); border-width: 1px 0; }
    .side-extra { display: flex; flex-direction: column; flex: none; height: 79px; gap: 14px; padding: 5px 0 0 5px; align-items: center; }
    .main { display: flex; flex-direction: column; flex: 1; min-width: 0; }

    .ticket { display: flex; flex: none; height: 92px; padding-left: 515px; border-bottom: 2px solid var(--rule); }
    .t-tools { display: flex; flex-direction: column; align-items: center; gap: 6px; width: 37px; padding-top: 20px; border: solid var(--rule); border-width: 0 1px; }
    .t-wrench { width: 22px; height: 22px; border: 1px solid #aab3b8; border-radius: 2px; background: #f2f3f4; }
    .qty { display: flex; flex-direction: column; width: 152px; border-right: 2px solid var(--rule); }
    .tabs { display: flex; }
    .tab { width: 47px; height: 22px; padding-right: 8px; }
    .tab.alt { flex: 1; gap: 10px; padding: 0; background: linear-gradient(#fff, #e1e8ec); border: solid var(--rule); border-width: 0 0 2px 2px; }
    .qty-input { width: 63px; height: 26px; margin: 20px 0 0 41px; padding: 4px 3px 0; text-align: right; border: 1px solid #8f9ba3; border-radius: 3px; outline: 0; }
    .orders { display: flex; width: 208px; padding: 13px 0 10px; }
    .order { display: flex; flex-direction: column; align-items: center; gap: 7px; padding-top: 8px; width: 83px; border-left: 1px dashed #9aa4aa; }
    .order:first-child { width: 43px; border-left: 0; }
    .order-icons { display: flex; gap: 11px; }
    .deal { display: flex; flex-direction: column; width: 111px; border-right: 1px solid #e8f0e8; }
    .deal-head { display: flex; align-items: center; justify-content: center; gap: 7px; height: 21px; padding-bottom: 2px; }
    .deal-button { flex: 1; flex-direction: column; gap: 10px; padding-bottom: 3px; color: #fff; }
    .sell { background: linear-gradient(#f0595b, #d94547); }
    .buy { background: linear-gradient(#37c438, #25ac2b); }
    .quote { display: flex; align-items: flex-end; gap: 4px; }
    .quote-big { font-size: 28px; line-height: 25px; }
    .multi { display: flex; flex-direction: column; width: 231px; border: solid var(--rule); border-width: 0 1px 0 2px; }
    .multi-head { display: flex; align-items: center; justify-content: center; gap: 28px; height: 25px; border-bottom: 1px solid var(--rule); }
    .switch { display: flex; align-items: center; gap: 15px; }
    .switch input { appearance: none; width: 30px; height: 15px; border: 1px solid #8f9ba3; border-radius: 8px; background: radial-gradient(circle at 7px 50%, #000 5px, #fff 6px); }
    .multi-row { display: flex; flex: 1; }
    .stop { display: flex; align-items: center; gap: 5px; padding: 0 5px; }
    .stop + .stop { flex: 1; border-left: 1px solid var(--rule); }
    .stop label { display: flex; align-items: center; gap: 5px; }
    .stop input[type="checkbox"] { appearance: none; width: 15px; height: 15px; border: 1px solid #8f9ba3; border-radius: 2px; background: #fff; }
    .points { height: 27px; padding: 2px 0 0; text-align: center; color: #a0a5a9; border: 1px solid #8f9ba3; border-radius: 3px; outline: 0; background: #fff; }
    .long { width: 32px; }
    .short { width: 19px; }
    .unit { color: #a0a5a9; }

    .pane { display: flex; min-height: 0; border-bottom: 2px solid var(--rule); }
    .pane.equity { flex: 420; }
    .pane.price { flex: 368; border-bottom: 0; }
    .plot { position: relative; flex: 1; min-width: 0; }
    .price .plot { border-bottom: 1px solid var(--rule); }
    .equity .plot { border-left: 2px solid #107f18; }
    .chart { position: absolute; inset: 0; width: 100%; height: 100%; }
    .chart path, .chart line { vector-effect: non-scaling-stroke; }
    .crisp { shape-rendering: crispEdges; }
    .tag { position: absolute; left: 0; top: 0; display: flex; background: #e6eef3; border: solid var(--rule); border-width: 0 1px 2px 0; height: 25px; }
    .equity .tag { left: -2px; }
    .tag-part { display: flex; align-items: center; gap: 4px; padding: 0 4px; }
    .tag-part + .tag-part { border-left: 2px solid var(--rule); }
    .tag .add { margin-left: 4px; }
    .swatch { width: 12px; height: 12px; }
    .swatch.eq { background: linear-gradient(90deg, #6fe3f5 50%, #f9a0f4 50%); }
    .swatch.pr { background: linear-gradient(90deg, #44cf58 50%, #e86464 50%); }
    .watermark { position: absolute; right: 12px; top: 6px; font-size: 26px; line-height: 30px; color: #e0e0e0; }
    .source { position: absolute; left: 3px; bottom: -2px; }
    .axis { position: relative; display: flex; flex-direction: column; justify-content: space-between; width: 74px; flex: none; margin: 0; list-style: none; border-left: 1px solid var(--rule); overflow: hidden; }
    .equity .axis { padding: 25px 0 11px; }
    .price .axis { padding: 8px 0 7px; }
    .mark { display: flex; align-items: center; gap: 4px; height: 16px; }
    .mark::before { content: ""; width: 5px; height: 1px; background: var(--rule); }
    .strong { font-weight: bold; }
    .badge { position: absolute; left: 5px; display: flex; align-items: center; padding-left: 3px; border: 1px solid var(--rule); }
    .badge.eq { top: 30px; width: 59px; height: 21px; color: #dd85d5; background: linear-gradient(#fff, #e9edf0); }
    .badge.pr { top: 20px; width: 68px; height: 25px; font-size: 16px; font-weight: bold; background: linear-gradient(#ffdf22, #ebb70c); }
    .timeline { display: flex; flex: none; height: 39px; }
    .rewind { width: 20px; flex: none; margin-top: 1px; background: #1580de; color: #fff; }
    .year { display: flex; flex-direction: column; align-items: flex-end; min-width: 0; flex-basis: 0; }
    .year::before { content: ""; width: 1px; height: 4px; background: var(--rule); }
    .year:last-child::before { display: none; }
    .year span { width: 60px; margin: 3px -30px 0 0; text-align: center; }

    .bottom { display: flex; flex: none; align-items: center; height: 32px; background: var(--bar); border: solid var(--edge); border-width: 1px 1px 2px; }
    .bottom-draw { width: 37px; height: 100%; background: #b2c2cb; }
    .bottom-left { display: flex; gap: 4px; padding-right: 4px; }
    .bottom-left button, .bottom-right button { width: 28px; }
    .bottom-left .narrow { width: 14px; color: #53636d; }
    .scroll { display: flex; flex: 1; justify-content: space-between; height: 20px; border: 1px solid #8796a0; border-radius: 4px; background: #c6d8e3; }
    .scroll button { width: 19px; background: linear-gradient(90deg, #f6fafc, #d6e4ec); border-radius: 4px; }
    .bottom-right { display: flex; gap: 5px; padding: 0 0 0 5px; }
    .desk { flex: none; height: 1px; background: linear-gradient(90deg, #2c3840 5%, #fff 5%, #fff 81%, #2c3840 81%); }
  `;

  private tools(list: [string, string][]) {
    return list.map(([name, label]) => html`<button class=${name === "cursor" ? "on" : ""} aria-label=${label}>${icon(name)}</button>`);
  }

  private buttons(list: [string, string][], size = 24) {
    return list.map(([name, label]) => html`<button class=${name === "sound" ? "on" : ""} aria-label=${label}>${icon(name, size)}</button>`);
  }

  private choice(cls: string, label: string, value: string) {
    return html`<div class="choice ${cls}"><select aria-label=${label}><option>${value}</option></select>${icon("chevDown", 10)}</div>`;
  }

  private topBar() {
    return html`<header class="top">
      <div class="brand">
        <svg class="icon" width="22" height="26" viewBox="2 0 24 28" aria-hidden="true">${brandCandles}</svg>
        <div class="brand-text"><span class="brand-name">ProRealTime</span><span class="brand-tier">Premium</span></div>
      </div>
      <nav class="menu">
        ${["File", "Visualizza", "Trading", "Oggetti", "Impostazioni"].map((m) => html`<button>${m}</button>`)}
      </nav>
      <button class="help">${icon("headset", 24)}Aiuto</button>
      <button class="link" aria-label="Collega">${icon("link", 24)}</button>
      <label class="search"><input type="text" placeholder="Cercare..." aria-label="Cercare" />${icon("glasssearch", 20)}</label>
      <button class="fold" aria-label="Riduci">${icon("chevLeftGrey", 10)}</button>
      <div class="tools">${this.tools(TOOLS)}</div>
      <button class="more" aria-label="Altri strumenti">${icon("chevRight", 10)}</button>
      <div class="plan">
        <button aria-label="Salva">${icon("save")}</button>
        <div class="picker"><select aria-label="Piano"><option>Il mio piano(91)</option></select>${icon("chevDown", 10)}</div>
      </div>
      <div class="quick">
        ${this.buttons([["flag", "Bandiera"], ["sound", "Audio"], ["lock", "Blocco"], ["sync", "Sincronizza"], ["calc", "Calcolatrice"]], 27)}
      </div>
      <div class="corner">
        <div class="corner-row">
          ${[["wrenchBox", "Configura"], ["dock", "Aggancia"], ["pin", "Fissa"], ["min", "Riduci a icona"], ["close", "Chiudi"]].map(
            ([n, l]) => html`<button aria-label=${l}>${icon(n, 14)}</button>`
          )}
        </div>
        <span>sab 8 giu</span>
      </div>
    </header>`;
  }

  private secondBar() {
    return html`<div class="second">
      <button class="cell" aria-label="Grafico">${icon("candles", 22)}</button>
      <button class="cell-link" aria-label="Collegamento">${icon("linkcheck", 25)}</button>
      ${this.choice("w-symbol", "Strumento", "NASDAQ")}
      ${this.choice("w-frame", "Periodo", "1 giorno")}
      ${this.choice("w-units", "Unità", "20 k unità")}
      <button class="ind">${icon("indicators", 26)}Indicatori</button>
      <button class="ind-more plain" aria-label="Altri indicatori">${icon("chevDown", 10)}</button>
      <div class="plain grow"><button aria-label="Informazioni">${icon("info", 15)}</button></div>
      <button class="reload" aria-label="Aggiorna">${icon("refresh", 22)}</button>
      <div class="plain window-buttons">
        ${[["min", "Riduci"], ["restore", "Ripristina"], ["close", "Chiudi grafico"]].map(
          ([n, l]) => html`<button aria-label=${l}>${icon(n, 13)}</button>`
        )}
      </div>
    </div>`;
  }

  private ticket() {
    return html`<section class="ticket">
      <div class="t-tools">
        <button class="t-wrench" aria-label="Opzioni">${icon("wrench", 18)}</button>
        <button aria-label="Tastiera">${icon("keyboard", 24)}</button>
      </div>
      <div class="qty">
        <div class="tabs">
          <button class="tab">Qtà</button>
          <button class="tab alt">Qtà Auto ${icon("bubble", 16)}</button>
        </div>
        <input class="qty-input" aria-label="Quantità" value="1" />
      </div>
      <div class="orders">
        <div class="order"><div class="order-icons"><button aria-label="TO">${icon("to", 27)}</button></div><span>TO</span></div>
        <div class="order">
          <div class="order-icons"><button aria-label="LIM">${icon("limH", 27)}</button><button aria-label="LIM diagonale">${icon("limD", 27)}</button></div>
          <span>LIM</span>
        </div>
        <div class="order">
          <div class="order-icons"><button aria-label="STP">${icon("stpH", 27)}</button><button aria-label="STP diagonale">${icon("stpD", 27)}</button></div>
          <span>STP</span>
        </div>
      </div>
      <div class="deal">
        <div class="deal-head">Vendi ${icon("info", 15)}</div>
        <button class="deal-button sell"><span>Vendere MKT</span><span class="quote"><span>18.9</span><span class="quote-big">90,8</span></span></button>
      </div>
      <div class="deal">
        <div class="deal-head">Compra ${icon("info", 15)}</div>
        <button class="deal-button buy"><span>Comprare MKT</span><span class="quote"><span>18.9</span><span class="quote-big">95,8</span></span></button>
      </div>
      <div class="multi">
        <div class="multi-head"><label class="switch"><input type="checkbox" role="switch" />Multi</label>${icon("bubble", 16)}</div>
        <div class="multi-row">
          <div class="stop"><label><input type="checkbox" />L</label><input class="points long" aria-label="Distanza L" value="5.1" /><span class="unit">pnt/ctr</span></div>
          <div class="stop"><label><input type="checkbox" />S</label><input class="points short" aria-label="Distanza S" value="8" /><span class="unit">pnt/ctr</span></div>
        </div>
      </div>
    </section>`;
  }

  private charts() {
    return html`
      <section class="pane equity">
        <div class="plot">
          <svg class="chart" viewBox="42 171 1803 418" preserveAspectRatio="none" role="img" aria-label="Universal XBody Strategy">
            <path d=${equityArea} fill="#e8fcff" />
            ${equityPaths.map((d, i) => svg`<path d=${d} fill="none" stroke=${equityColors[i]} stroke-width="2.5" stroke-linecap="round"/>`)}
            <line class="crisp" x1="40" x2="1845" y1="571.5" y2="571.5" stroke="#2a3590" stroke-width="1" />
          </svg>
          <div class="tag"><div class="tag-part"><span class="swatch eq"></span><span>Universal XBody Strategy(4) (878 1 41 0 15)</span><button class="add" aria-label="Aggiungi">${icon("cross4", 13)}</button></div></div>
        </div>
        <ul class="axis">
          ${[140, 135, 130, 125, 120, 115, 110, 105, 100].map((v) => html`<li class="mark ${v === 100 ? "strong" : ""}">${v}.000</li>`)}
          <li class="badge eq">139.236</li>
        </ul>
      </section>
      <section class="pane price">
        <div class="plot">
          <div class="watermark">US Tech 100 Cash (1€)</div>
          <svg class="chart" viewBox="40 591 1805 367" preserveAspectRatio="none" role="img" aria-label="Prezzo">
            ${candlePaths.map((d, i) => svg`<path class="crisp" d=${d} fill="none" stroke=${candleColors[i]} stroke-width="1"/>`)}
          </svg>
          <div class="tag">
            <div class="tag-part"><span class="swatch pr"></span><span>Prezzo</span><button class="add" aria-label="Aggiungi a prezzo">${icon("cross4", 13)}</button></div>
            <div class="tag-part"><button aria-label="Elenco">${icon("list", 14)}</button></div>
          </div>
          <div class="source">IT-Finance.com - Tempo Reale</div>
        </div>
        <ul class="axis">
          ${[20, 18, 16, 14, 12, 10, 8, 6, 4, 2, 0].map((v) => html`<li class="mark ${v % 10 === 0 ? "strong" : ""}">${v === 0 ? "0" : `${v}.000`}</li>`)}
          <li class="badge pr">18.993,3</li>
        </ul>
      </section>
      <div class="timeline">
        <button class="rewind" aria-label="Indietro">${icon("dblLeft", 12)}</button>
        ${YEARS.map(([label, gap]) => html`<div class="year" style=${styleMap({ flexGrow: String(gap) })}>${label ? html`<span>${label}</span>` : nothing}</div>`)}
      </div>`;
  }

  render() {
    return html`<div class="app">
      ${this.topBar()} ${this.secondBar()}
      <div class="body">
        <aside class="side">
          <button class="side-cap" aria-label="Scorri su">${icon("chevUp", 10)}</button>
          <div class="side-clip"><div class="side-list">${this.tools(SIDE_TOOLS)}</div></div>
          <button class="side-foot" aria-label="Scorri giù">${icon("chevDown", 10)}</button>
          <div class="side-extra"><button aria-label="Rapporti">${icon("report")}</button><button aria-label="Altro">${icon("dots")}</button></div>
        </aside>
        <main class="main">${this.ticket()} ${this.charts()}</main>
      </div>
      <footer class="bottom">
        <button class="bottom-draw" aria-label="Disegno">${icon("draw", 26)}</button>
        <div class="bottom-left">
          ${this.buttons([["share", "Condividi"], ["chat", "Chat"], ["book", "Ordini"], ["depth", "Book"], ["windows", "Finestre"]], 25)}
          <button class="narrow" aria-label="Nascondi">${icon("dblLeft", 12)}</button>
        </div>
        <div class="scroll"><button aria-label="Scorri a sinistra">${icon("chevLeft", 11)}</button><button aria-label="Scorri a destra">${icon("chevRight", 11)}</button></div>
        <div class="bottom-right">
          ${this.buttons([["calendar", "Calendario"], ["undo", "Annulla"], ["redo", "Ripeti"], ["candlewrench", "Stile"], ["zoomfit", "Adatta"], ["zoomout", "Riduci zoom"], ["zoomin", "Aumenta zoom"], ["keys", "Tasti"]], 24)}
        </div>
      </footer>
      <div class="desk"></div>
    </div>`;
  }
}
